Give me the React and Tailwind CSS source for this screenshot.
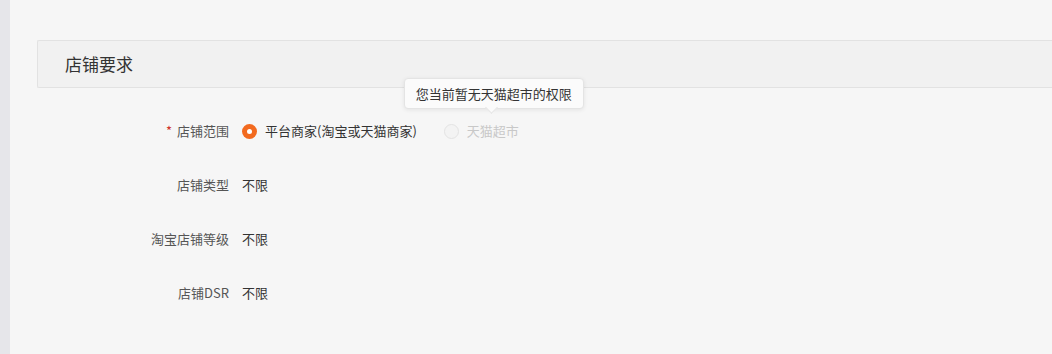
import React from "react";

const font = { fontFamily: '"Noto Sans CJK SC", "Noto Sans", sans-serif' };

const rows = [
  { label: "店铺类型", value: "不限" },
  { label: "淘宝店铺等级", value: "不限" },
  { label: "店铺DSR", value: "不限" },
];

const Radio = ({ checked, disabled, label }) => (
  <label className={`flex items-center gap-[8px] ${disabled ? "cursor-not-allowed" : "cursor-pointer"}`}>
    {checked ? (
      <span className="w-[15px] h-[15px] rounded-full bg-[#f26a1f] flex items-center justify-center">
        <span className="w-[5px] h-[5px] rounded-full bg-white" />
      </span>
    ) : (
      <span className="w-[15px] h-[15px] rounded-full border border-[#e3e3e3] bg-[#f3f3f3]" />
    )}
    <span className={disabled ? "text-[#c8c8c8]" : "text-[#333]"}>{label}</span>
  </label>
);

export default function App() {
  return (
    <div className="flex min-h-[354px] bg-[#f6f6f6] text-[13px]" style={font}>
      {/* left strip */}
      <div className="w-[10px] shrink-0 bg-[#e6e6ea]" />

      <div className="flex-1 pt-[40px] pl-[27px] overflow-hidden">
        {/* section header */}
        <div className="h-[48px] flex items-center pl-[27px] bg-[#f1f1f1] border border-r-0 border-[#e2e2e2] rounded-l-[2px]">
          <h2 className="text-[17px] text-[#333]">店铺要求</h2>
        </div>

        <div className="mt-[16px]">
          {/* shop scope */}
          <div className="flex items-center h-[54px]">
            <div className="w-[192px] text-right text-[#555]">
              <span className="text-[#d0342c] mr-[5px]">*</span>店铺范围
            </div>
            <div className="flex items-center gap-[27px] ml-[13px]">
              <Radio checked label="平台商家(淘宝或天猫商家)" />
              <div className="relative">
                <Radio disabled label="天猫超市" />
                {/* tooltip */}
                <div className="absolute left-[-40px] bottom-[calc(100%+12px)] whitespace-nowrap bg-[#fbfbfb] border border-[#e4e4e4] rounded-[4px] shadow-[0_1px_4px_rgba(0,0,0,0.08)] px-[11px] h-[31px] flex items-center text-[#333]">
                  您当前暂无天猫超市的权限
                  <span className="absolute left-[82px] top-full -mt-[5px] w-[9px] h-[9px] rotate-45 bg-[#fbfbfb] border-r border-b border-[#e4e4e4]" />
                </div>
              </div>
            </div>
          </div>

          {rows.map((row) => (
            <div key={row.label} className="flex items-center h-[54px]">
              <div className="w-[192px] text-right text-[#555]">{row.label}</div>
              <div className="ml-[13px] text-[#333]">{row.value}</div>
            </div>
          ))}
        </div>
      </div>
    </div>
  );
}
